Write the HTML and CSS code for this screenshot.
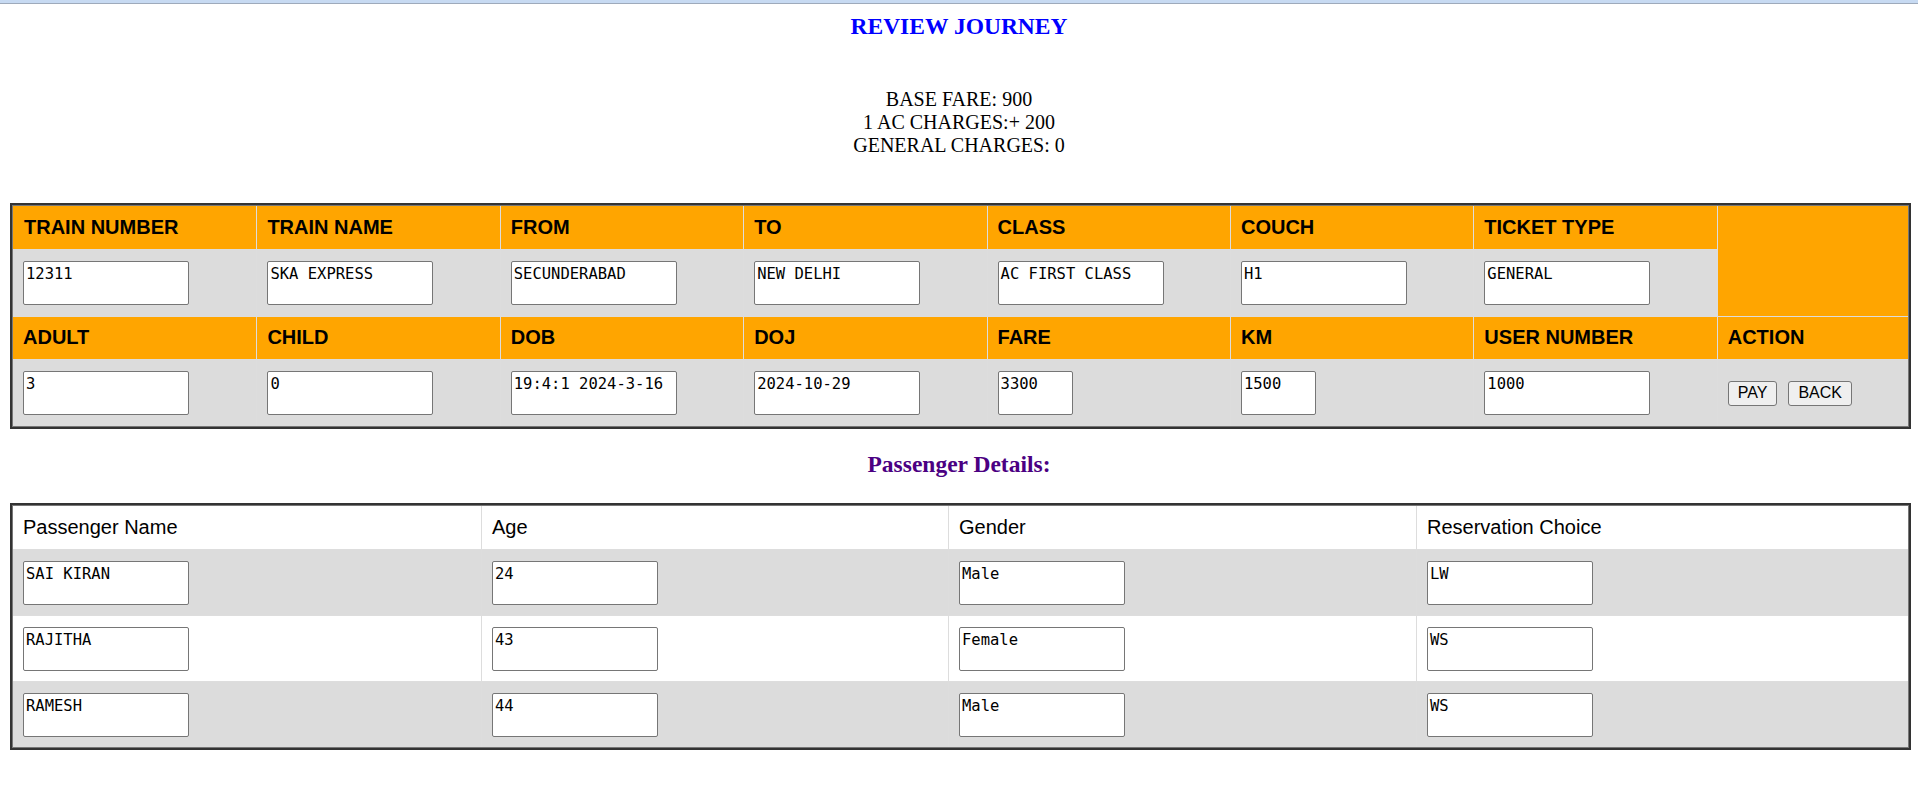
FILE: index.html
```html
<!DOCTYPE html>
<html lang="en">
<head>
<meta charset="utf-8">
<title>Review Journey</title>
<link rel="stylesheet" href="styles.css">
</head>
<body>
<div class="topbar"></div>
<h2 class="title">REVIEW JOURNEY</h2>
<div class="fares">BASE FARE: 900<br>1 AC CHARGES:+ 200<br>GENERAL CHARGES: 0</div>

<div class="frame">
  <table class="journey">
    <colgroup>
      <col class="jc"><col class="jc"><col class="jc"><col class="jc"><col class="jc"><col class="jc"><col class="jc"><col>
    </colgroup>
    <tr class="head">
      <th class="lead">TRAIN NUMBER</th><th>TRAIN NAME</th><th>FROM</th><th>TO</th><th>CLASS</th><th>COUCH</th><th>TICKET TYPE</th><th rowspan="2" class="blank"></th>
    </tr>
    <tr class="data">
      <td><textarea class="box" readonly>12311</textarea></td>
      <td><textarea class="box" readonly>SKA EXPRESS</textarea></td>
      <td><textarea class="box" readonly>SECUNDERABAD</textarea></td>
      <td><textarea class="box" readonly>NEW DELHI</textarea></td>
      <td><textarea class="box" readonly>AC FIRST CLASS</textarea></td>
      <td><textarea class="box" readonly>H1</textarea></td>
      <td><textarea class="box" readonly>GENERAL</textarea></td>
    </tr>
    <tr class="head head2">
      <th>ADULT</th><th>CHILD</th><th>DOB</th><th>DOJ</th><th>FARE</th><th>KM</th><th>USER NUMBER</th><th>ACTION</th>
    </tr>
    <tr class="data">
      <td><textarea class="box" readonly>3</textarea></td>
      <td><textarea class="box" readonly>0</textarea></td>
      <td><textarea class="box" readonly>19:4:1 2024-3-16</textarea></td>
      <td><textarea class="box" readonly>2024-10-29</textarea></td>
      <td><textarea class="box small" readonly>3300</textarea></td>
      <td><textarea class="box small" readonly>1500</textarea></td>
      <td><textarea class="box" readonly>1000</textarea></td>
      <td><div class="actions"><button class="btn" type="button">PAY</button><button class="btn" type="button">BACK</button></div></td>
    </tr>
  </table>
</div>

<h2 class="sub">Passenger Details:</h2>

<div class="frame frame2">
  <table class="passengers">
    <colgroup>
      <col class="pc1"><col class="pc2"><col class="pc3"><col>
    </colgroup>
    <tr>
      <th>Passenger Name</th><th>Age</th><th>Gender</th><th>Reservation Choice</th>
    </tr>
    <tr>
      <td><textarea class="box" readonly>SAI KIRAN</textarea></td>
      <td><textarea class="box" readonly>24</textarea></td>
      <td><textarea class="box" readonly>Male</textarea></td>
      <td><textarea class="box" readonly>LW</textarea></td>
    </tr>
    <tr>
      <td><textarea class="box" readonly>RAJITHA</textarea></td>
      <td><textarea class="box" readonly>43</textarea></td>
      <td><textarea class="box" readonly>Female</textarea></td>
      <td><textarea class="box" readonly>WS</textarea></td>
    </tr>
    <tr>
      <td><textarea class="box" readonly>RAMESH</textarea></td>
      <td><textarea class="box" readonly>44</textarea></td>
      <td><textarea class="box" readonly>Male</textarea></td>
      <td><textarea class="box" readonly>WS</textarea></td>
    </tr>
  </table>
</div>
</body>
</html>
```

FILE: styles.css
```css
* { box-sizing: border-box; }

body {
  margin: 0;
  background: #ffffff;
  color: #000000;
  font-family: "Liberation Serif", "Times New Roman", serif;
}

.topbar {
  height: 4px;
  background: #c7daf2;
  border-bottom: 1px solid #9eaabb;
}

.title {
  margin: 9px 0 0;
  text-align: center;
  color: #0000ff;
  font-size: 23.5px;
  line-height: 26px;
  font-weight: bold;
}

.fares {
  margin-top: 49px;
  text-align: center;
  font-size: 20px;
  line-height: 23px;
}

.frame {
  margin: 46px 7px 0 10px;
  border: 2px solid #333333;
  padding: 1px;
  background: #777777;
}

.frame2 { margin-top: 26px; }

.sub {
  margin: 22px 0 0;
  text-align: center;
  color: #4b0082;
  font-size: 23.5px;
  line-height: 26px;
  font-weight: bold;
}

table {
  width: 100%;
  border-collapse: separate;
  border-spacing: 0;
  table-layout: fixed;
  font-family: "Liberation Sans", Arial, sans-serif;
  font-size: 20px;
  background: #ffffff;
}

.jc { width: 243.4px; }
.pc1 { width: 468px; }
.pc2 { width: 467px; }
.pc3 { width: 468px; }

th, td {
  border-left: 1px solid #dddddd;
  border-top: 1px solid #dddddd;
  text-align: left;
  vertical-align: middle;
}

th:first-child, td:first-child { border-left: 0; }
tr:first-child > th, tr:first-child > td { border-top: 0; }

.journey th {
  background: #ffa500;
  font-weight: bold;
  line-height: 23px;
  padding: 10px 10px;
}

.journey th.lead { padding-left: 11px; }

.journey .head2 th { padding-top: 9px; }

.journey td {
  background: #dcdcdc;
  padding: 11px 10px;
}

.passengers th {
  font-weight: normal;
  line-height: 23px;
  padding: 10px 10px;
  background: #ffffff;
}

.passengers td {
  padding: 11px 10px 10px;
  background: #ffffff;
}

.passengers tr:nth-child(even) td { background: #dcdcdc; }

.box {
  display: block;
  width: 166px;
  height: 44px;
  margin: 0;
  padding: 3px 2px;
  border: 1px solid #767676;
  border-radius: 2px;
  background: #ffffff;
  color: #000000;
  font-family: "DejaVu Sans Mono", "Liberation Mono", monospace;
  font-size: 15.5px;
  line-height: normal;
  resize: none;
  overflow: hidden;
  white-space: pre;
}

.box.small { width: 75px; }

.actions {
  display: flex;
  gap: 11px;
  align-items: center;
}

.btn {
  height: 25px;
  margin: 0;
  padding: 2px 9px;
  border: 1px solid #767676;
  border-radius: 3px;
  background: #efefef;
  color: #000000;
  font-family: "Liberation Sans", Arial, sans-serif;
  font-size: 16px;
  line-height: 18px;
}
```
